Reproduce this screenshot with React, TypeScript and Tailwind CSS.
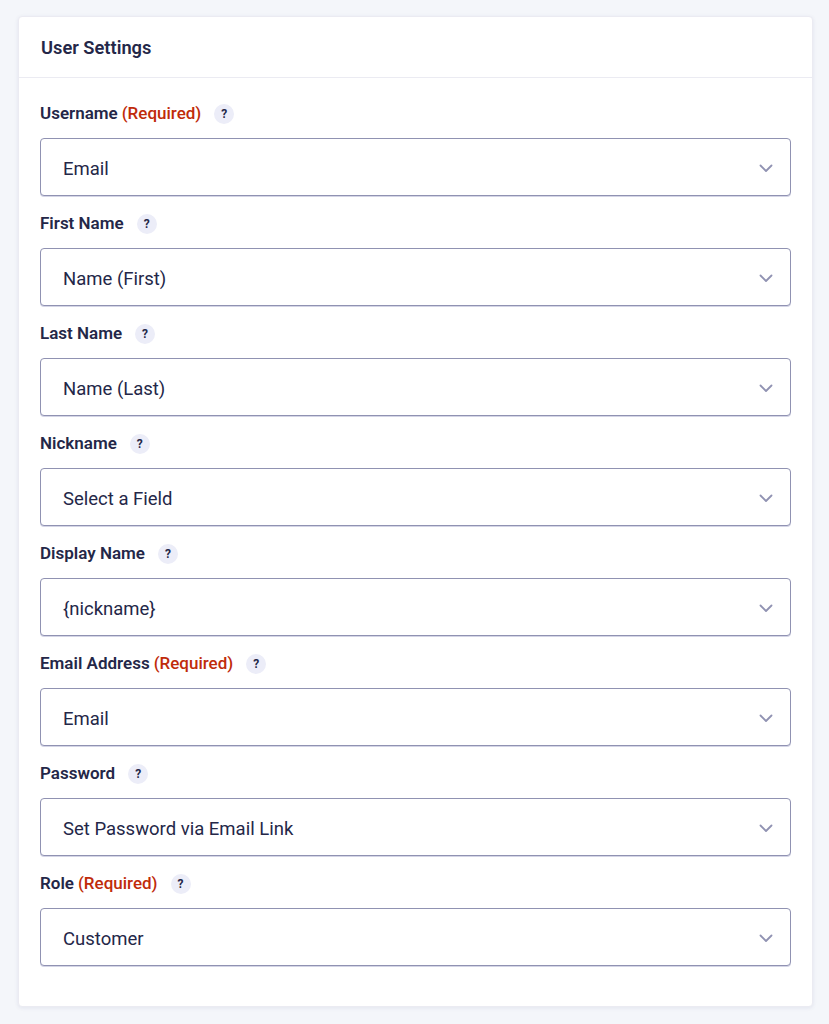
import React from 'react';

type Field = {
  label: string;
  required?: boolean;
  value: string;
};

const fields: Field[] = [
  { label: 'Username', required: true, value: 'Email' },
  { label: 'First Name', value: 'Name (First)' },
  { label: 'Last Name', value: 'Name (Last)' },
  { label: 'Nickname', value: 'Select a Field' },
  { label: 'Display Name', value: '{nickname}' },
  { label: 'Email Address', required: true, value: 'Email' },
  { label: 'Password', value: 'Set Password via Email Link' },
  { label: 'Role', required: true, value: 'Customer' },
];

const Chevron = () => (
  <svg width="14" height="9" viewBox="0 0 14 9" fill="none" className="text-[#9092b2] mt-[3px]">
    <path d="M1.5 1.5L7 7l5.5-5.5" stroke="currentColor" strokeWidth="1.8" strokeLinecap="round" strokeLinejoin="round" />
  </svg>
);

const SettingRow: React.FC<{ field: Field }> = ({ field }) => (
  <div className="flex flex-col">
    <div className="flex items-center h-5 mt-[1px] -mb-[1px]">
      <span className="text-[17px] font-semibold text-[#242748]">{field.label}</span>
      {field.required && <span className="ml-1 text-[17px] font-medium text-[#c02b0a]">(Required)</span>}
      <span className="ml-[13px] w-5 h-5 rounded-full bg-[#ecedf8] flex items-center justify-center text-[12px] font-bold text-[#242748]">?</span>
    </div>
    <div className="mt-[15px] h-[58px] flex items-center justify-between pl-[22px] pr-[17px] border border-[#9092b2] rounded-[4px] bg-white shadow-[0_1px_0_#d4d5e6]">
      <span className="text-[18.5px] text-[#242748] mt-[5px]">{field.value}</span>
      <Chevron />
    </div>
  </div>
);

export default function App() {
  return (
    <div className="min-h-screen bg-[#f4f6fa] pt-4 pl-[18px] pr-4 pb-4" style={{ fontFamily: 'Roboto, "Liberation Sans", sans-serif' }}>
      <div className="bg-white rounded-[4px] border border-[#ebebf2] shadow-[0_1px_4px_rgba(18,25,97,0.08)]">
        <div className="h-[61px] flex items-center px-[22px] border-b border-[#ebebf2]">
          <h3 className="text-[18.3px] font-semibold text-[#242748] mt-[1px]">User Settings</h3>
        </div>
        <div className="pt-[25px] pb-10 px-[21px] flex flex-col gap-[17px]">
          {fields.map((f) => (
            <SettingRow key={f.label} field={f} />
          ))}
        </div>
      </div>
    </div>
  );
}
